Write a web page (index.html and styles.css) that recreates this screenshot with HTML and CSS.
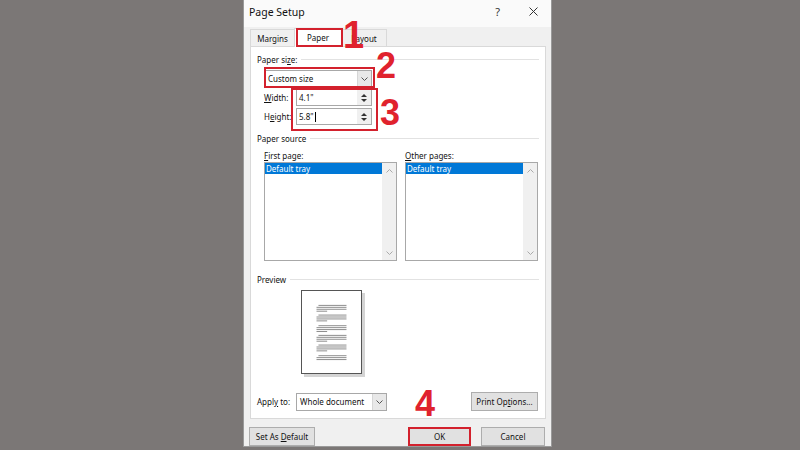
FILE: index.html
```html
<!DOCTYPE html>
<html lang="en">
<head>
    <meta charset="UTF-8">
    <title>Page Setup</title>
    <link rel="stylesheet" href="styles.css">
</head>
<body>
    <div class="dialog">
        <div class="titlebar">
            <span class="title">Page Setup</span>
            <span class="help">?</span>
            <svg class="close" width="9" height="9" viewBox="0 0 9 9"><path d="M0.5 0.5L8.5 8.5M8.5 0.5L0.5 8.5" stroke="#333" stroke-width="1"/></svg>
        </div>

        <div class="tabs">
            <div class="tab">Margins</div>
            <div class="tab active">Paper</div>
            <div class="tab">Layout</div>
        </div>

        <div class="panel">
            <div class="group-head"><span>Paper si<u>z</u>e:</span></div>
            <div class="select size-select">
                <span class="select-text">Custom size</span>
                <span class="drop"><svg width="7" height="4" viewBox="0 0 7 4"><path d="M0.5 0.5L3.5 3.5L6.5 0.5" fill="none" stroke="#555" stroke-width="1"/></svg></span>
            </div>

            <div class="dim-row">
                <label><u>W</u>idth:</label>
                <div class="spin">
                    <span class="spin-text">4.1"</span>
                    <span class="spin-btns"><span class="up"></span><span class="down"></span></span>
                </div>
            </div>
            <div class="dim-row">
                <label>H<u>e</u>ight:</label>
                <div class="spin">
                    <span class="spin-text">5.8"<span class="caret"></span></span>
                    <span class="spin-btns"><span class="up"></span><span class="down"></span></span>
                </div>
            </div>

            <div class="group-head source-head"><span>Paper source</span></div>
            <div class="source-row">
                <div class="source-col">
                    <div class="list-label"><u>F</u>irst page:</div>
                    <div class="listbox">
                        <div class="items"><div class="item selected">Default tray</div></div>
                        <div class="scroll">
                            <svg width="7" height="4" viewBox="0 0 7 4"><path d="M0.5 3.5L3.5 0.5L6.5 3.5" fill="none" stroke="#aaa" stroke-width="1"/></svg>
                            <svg width="7" height="4" viewBox="0 0 7 4"><path d="M0.5 0.5L3.5 3.5L6.5 0.5" fill="none" stroke="#aaa" stroke-width="1"/></svg>
                        </div>
                    </div>
                </div>
                <div class="source-col">
                    <div class="list-label"><u>O</u>ther pages:</div>
                    <div class="listbox">
                        <div class="items"><div class="item selected">Default tray</div></div>
                        <div class="scroll">
                            <svg width="7" height="4" viewBox="0 0 7 4"><path d="M0.5 3.5L3.5 0.5L6.5 3.5" fill="none" stroke="#aaa" stroke-width="1"/></svg>
                            <svg width="7" height="4" viewBox="0 0 7 4"><path d="M0.5 0.5L3.5 3.5L6.5 0.5" fill="none" stroke="#aaa" stroke-width="1"/></svg>
                        </div>
                    </div>
                </div>
            </div>

            <div class="group-head preview-head"><span>Preview</span></div>
            <div class="preview-page">
                <svg width="61" height="84" viewBox="0 0 61 84">
                    <g stroke="#8a8a8a" stroke-width="1">
                        <path d="M17 14.5H46M15 16.5H46M15 18.5H46M15 20.5H26"/>
                        <path d="M17 24.5H46M15 26.5H46M15 28.5H46M15 30.5H26"/>
                        <path d="M17 35.5H46M15 37.5H46M15 39.5H46M15 41.5H26"/>
                        <path d="M17 45.5H46M15 47.5H46M15 49.5H46M15 51.5H26"/>
                        <path d="M17 55.5H46M15 57.5H46M15 59.5H46M15 61.5H26"/>
                        <path d="M17 66.5H46M15 68.5H46M15 70.5H46"/>
                    </g>
                </svg>
            </div>

            <div class="apply-row">
                <label>Appl<u>y</u> to:</label>
                <div class="select apply-select">
                    <span class="select-text">Whole document</span>
                    <span class="drop"><svg width="7" height="4" viewBox="0 0 7 4"><path d="M0.5 0.5L3.5 3.5L6.5 0.5" fill="none" stroke="#555" stroke-width="1"/></svg></span>
                </div>
                <button class="btn print-btn"><span>Print Op<u>t</u>ions...</span></button>
            </div>
        </div>

        <div class="footer">
            <button class="btn default-btn"><span>Set As <u>D</u>efault</span></button>
            <button class="btn ok-btn">OK</button>
            <button class="btn cancel-btn">Cancel</button>
        </div>

        <!-- tutorial annotations -->
        <div class="mark-box box-tab"></div>
        <div class="mark-box box-size"></div>
        <div class="mark-box box-dims"></div>
        <span class="mark-num num-1">1</span>
        <span class="mark-num num-2">2</span>
        <span class="mark-num num-3">3</span>
        <span class="mark-num num-4">4</span>
    </div>
</body>
</html>
```

FILE: styles.css
```css
:root {
    --bg: #7b7776;
    --face: #f0f0f0;
    --border: #d9d9d9;
    --ctrl-border: #a8a8a8;
    --btn: #e1e1e1;
    --btn-border: #adadad;
    --select-blue: #0078d7;
    --mark: #e0222d;
    --text: #111;
}

* {
    margin: 0;
    padding: 0;
    box-sizing: border-box;
}

body {
    background-color: var(--bg);
    width: 800px;
    height: 450px;
    overflow: hidden;
    padding-left: 243px;
    font-family: 'Noto Sans', 'Open Sans', sans-serif;
    font-size: 8px;
    color: var(--text);
}

u {
    text-decoration: underline;
    text-underline-offset: 1px;
}

.dialog {
    position: relative;
    width: 309px;
    height: 447px;
    background: var(--face);
    border: 1px solid #9a9a9a;
    border-top: none;
    display: flex;
    flex-direction: column;
}

.titlebar {
    height: 27px;
    background: #fafafa;
    display: flex;
    align-items: center;
    padding: 0 13px 0 5px;
}

.title {
    font-size: 10.5px;
    flex: 1;
    margin-top: -3px;
}

.help {
    font-size: 11px;
    color: #333;
    margin-right: 29px;
    margin-top: -4px;
}

.close {
    margin-top: -4px;
}

.tabs {
    display: flex;
    align-items: flex-end;
    height: 19px;
    padding-left: 6px;
}

.tab {
    height: 17px;
    padding: 0 8px;
    border: 1px solid var(--border);
    border-bottom: none;
    display: flex;
    align-items: center;
    justify-content: center;
}

.tab + .tab {
    margin-left: -1px;
}

.tab:first-child {
    width: 45px;
}

.tab.active {
    width: 48px;
    height: 19px;
    background: white;
    position: relative;
    z-index: 1;
    margin-bottom: -1px;
    padding-bottom: 1px;
}

.tab:last-child {
    width: 46px;
}

.panel {
    margin-left: 6px;
    width: 296px;
    height: 373px;
    background: white;
    border: 1px solid var(--border);
    padding: 6px 6px 0 6px;
}

.group-head {
    display: flex;
    align-items: center;
    height: 12px;
}

.group-head::after {
    content: '';
    flex: 1;
    height: 1px;
    background: #e2e2e2;
    margin-left: 4px;
}

.select {
    display: flex;
    height: 17px;
    border: 1px solid var(--ctrl-border);
    background: white;
}

.select-text {
    flex: 1;
    display: flex;
    align-items: center;
    padding-left: 3px;
}

.drop {
    width: 14px;
    background: #e8e8e8;
    border-left: 1px solid #d6d6d6;
    display: flex;
    align-items: center;
    justify-content: center;
}

.size-select {
    width: 108px;
    margin: 5px 0 0 7px;
}

.dim-row {
    display: flex;
    align-items: center;
    margin: 2px 0 0 7px;
}

.dim-row:first-of-type {
    margin-top: 3px;
}

.dim-row label {
    width: 32px;
}

.spin {
    width: 76px;
    height: 17px;
    border: 1px solid var(--ctrl-border);
    display: flex;
}

.spin-text {
    flex: 1;
    display: flex;
    align-items: center;
    padding-left: 2px;
}

.caret {
    display: inline-block;
    width: 1px;
    height: 10px;
    background: #000;
    margin-left: 1px;
}

.spin-btns {
    width: 14px;
    background: #f0f0f0;
    display: flex;
    flex-direction: column;
    align-items: center;
    justify-content: center;
    gap: 2px;
}

.up,
.down {
    width: 0;
    height: 0;
    border-left: 3px solid transparent;
    border-right: 3px solid transparent;
}

.up {
    border-bottom: 3px solid #333;
}

.down {
    border-top: 3px solid #333;
}

.source-head {
    margin-top: 7px;
}

.source-row {
    display: flex;
    gap: 8px;
    margin: 5px 0 0 7px;
}

.list-label {
    height: 12px;
    display: flex;
    align-items: center;
}

.listbox {
    width: 133px;
    height: 99px;
    margin-top: 1px;
    border: 1px solid var(--ctrl-border);
    display: flex;
}

.items {
    flex: 1;
}

.item {
    height: 11px;
    line-height: 11px;
    padding-left: 1px;
}

.item.selected {
    background: var(--select-blue);
    color: white;
}

.scroll {
    width: 14px;
    background: #f0f0f0;
    display: flex;
    flex-direction: column;
    justify-content: space-between;
    align-items: center;
    padding: 6px 0 5px;
}

.preview-head {
    margin-top: 12px;
}

.preview-page {
    width: 64px;
    height: 89px;
    margin: 5px 0 0 44px;
    display: flex;
}

.preview-page svg {
    border: 1px solid #555;
    background: white;
    box-shadow: 3px 3px 0 #d4d4d4;
}

.apply-row {
    display: flex;
    align-items: center;
    margin-top: 13px;
}

.apply-row label {
    width: 39px;
}

.apply-select {
    width: 91px;
    height: 18px;
}

.btn {
    font-family: inherit;
    font-size: 8px;
    color: var(--text);
    background: var(--btn);
    border: 1px solid var(--btn-border);
    height: 19px;
    display: flex;
    align-items: center;
    justify-content: center;
}

.print-btn {
    width: 67px;
    margin-left: auto;
    margin-right: 1px;
}

.footer {
    display: flex;
    align-items: center;
    padding: 0 6px 0 5px;
    margin-top: 8px;
}

.default-btn {
    width: 66px;
}

.ok-btn {
    width: 63px;
    margin-left: auto;
    border: 2px solid #d3212d;
}

.cancel-btn {
    width: 64px;
    margin-left: 10px;
}

.mark-box {
    position: absolute;
    border: 2px solid #d3212d;
    z-index: 2;
}

.box-tab {
    left: 52px;
    top: 28px;
    width: 47px;
    height: 19px;
}

.box-size {
    left: 20px;
    top: 67px;
    width: 111px;
    height: 21px;
}

.box-dims {
    left: 47px;
    top: 88px;
    width: 87px;
    height: 43px;
}

.mark-num {
    position: absolute;
    font-family: 'Liberation Sans', Arial, sans-serif;
    font-weight: bold;
    font-size: 36px;
    line-height: 1;
    color: var(--mark);
    z-index: 3;
}

.num-1 { left: 99px; top: 16px; font-size: 38px; }
.num-2 { left: 132px; top: 48px; }
.num-3 { left: 136px; top: 95px; }
.num-4 { left: 171px; top: 386px; }
```
